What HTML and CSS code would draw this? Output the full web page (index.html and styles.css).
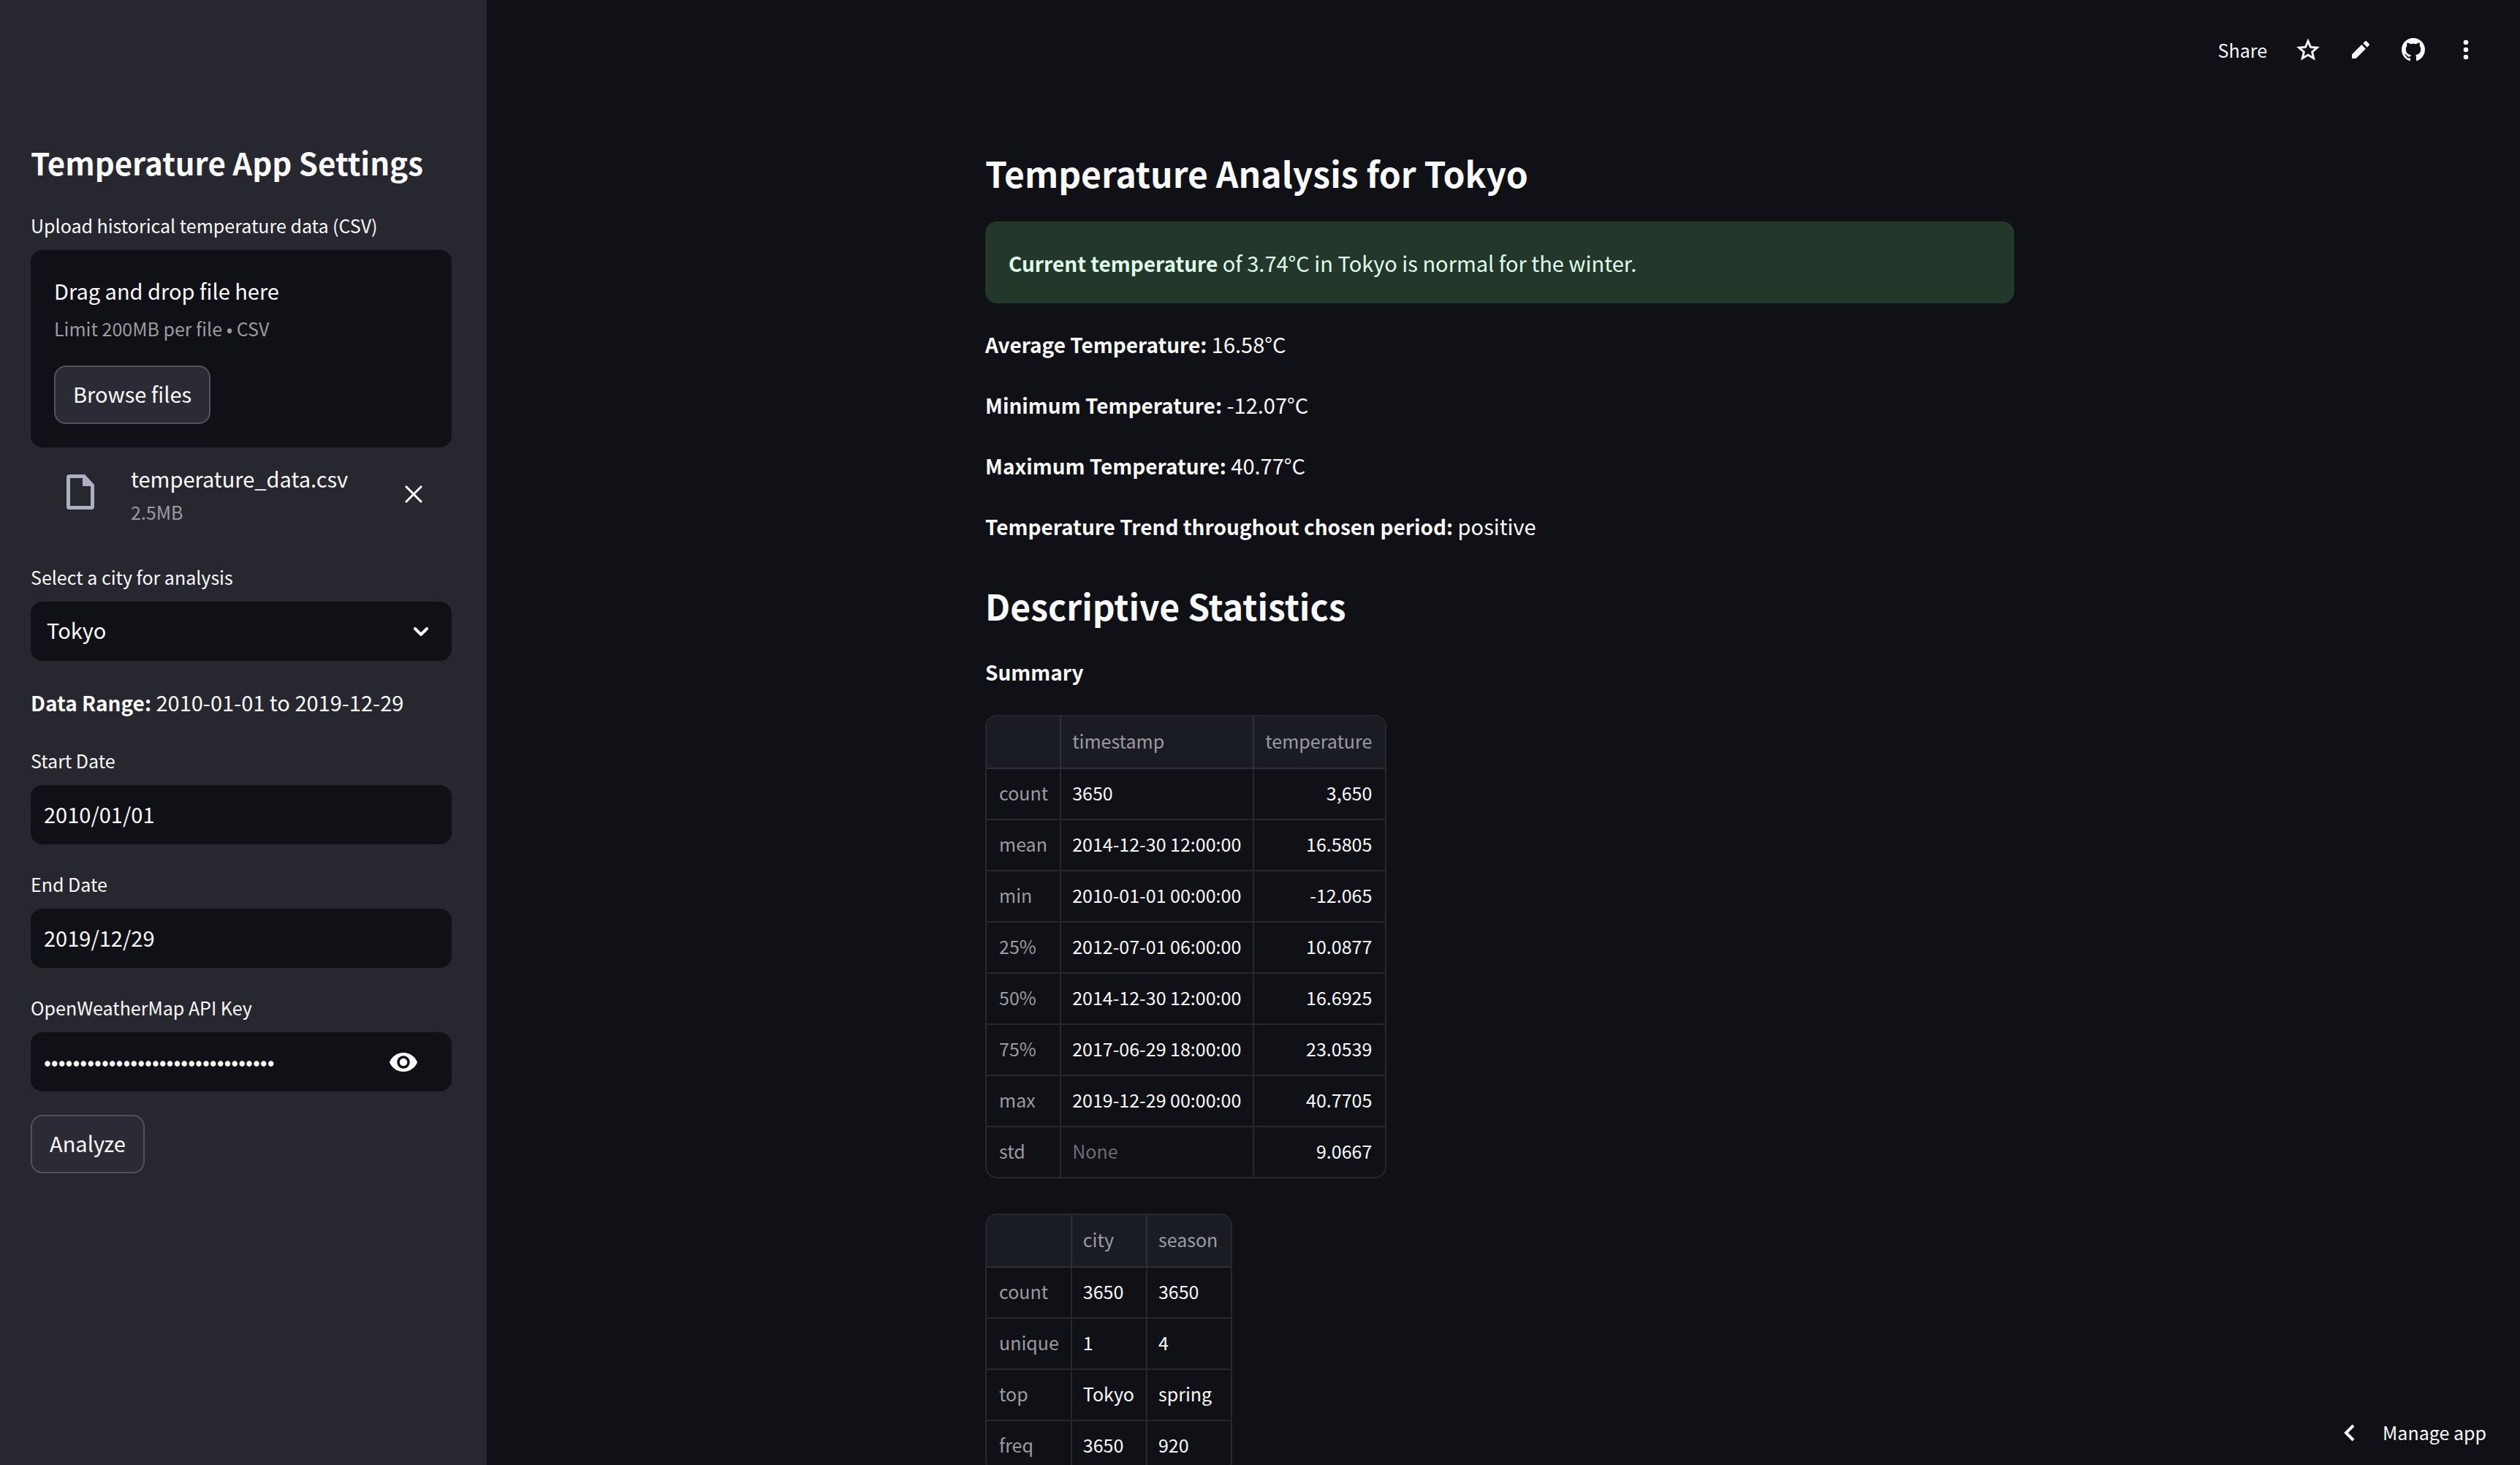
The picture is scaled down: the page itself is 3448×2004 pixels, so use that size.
FILE: index.html
```html
<!DOCTYPE html>
<html lang="en">
<head>
<meta charset="utf-8">
<meta name="viewport" content="width=device-width, initial-scale=1">
<title>Temperature Analysis</title>
<link rel="stylesheet" href="styles.css">
</head>
<body>
<div class="app">
  <aside class="sidebar">
    <h2 class="sidebar-title">Temperature App Settings</h2>

    <div class="field">
      <label class="label" for="browse">Upload historical temperature data (CSV)</label>
      <div class="dropzone">
        <p class="drop-title">Drag and drop file here</p>
        <p class="drop-note">Limit 200MB per file • CSV</p>
        <button class="button" id="browse" type="button">Browse files</button>
      </div>
    </div>

    <div class="file">
      <svg class="file-icon" viewBox="0 0 38 48" aria-hidden="true"><path fill="currentColor" fill-rule="evenodd" d="M4 0H25L38 14V44A4 4 0 0 1 34 48H4A4 4 0 0 1 0 44V4A4 4 0 0 1 4 0ZM5 5V43H33V16H22V5Z"/></svg>
      <div class="file-text">
        <span class="file-name">temperature_data.csv</span>
        <span class="file-size">2.5MB</span>
      </div>
      <button class="icon-button" type="button" aria-label="Remove file">
        <svg class="close-icon" viewBox="0 0 24 24" aria-hidden="true"><path fill="none" stroke="currentColor" stroke-width="3" d="M1 1L23 23M23 1L1 23"/></svg>
      </button>
    </div>

    <div class="field">
      <label class="label" for="city">Select a city for analysis</label>
      <div class="control">
        <select class="input select" id="city"><option>Tokyo</option></select>
        <svg class="chevron" viewBox="0 0 20 12" aria-hidden="true"><path fill="none" stroke="currentColor" stroke-width="4" stroke-linecap="round" stroke-linejoin="round" d="M2 2L10 10L18 2"/></svg>
      </div>
    </div>

    <p class="range"><strong>Data Range:</strong> 2010-01-01 to 2019-12-29</p>

    <div class="field">
      <label class="label" for="start">Start Date</label>
      <input class="input" id="start" type="text" value="2010/01/01">
    </div>
    <div class="field">
      <label class="label" for="end">End Date</label>
      <input class="input" id="end" type="text" value="2019/12/29">
    </div>
    <div class="field">
      <label class="label" for="key">OpenWeatherMap API Key</label>
      <div class="control">
        <input class="input password" id="key" type="password" value="0123456789abcdef0123456789abcdef">
        <button class="reveal" type="button" aria-label="Show password">
          <svg class="eye-icon" viewBox="0 0 22 15" aria-hidden="true"><path fill="currentColor" d="M11 0C6 0 1.730 3.110 0 7.500C1.730 11.890 6 15 11 15s9.270-3.110 11-7.500C20.270 3.110 16 0 11 0zM11 12.500c-2.760 0-5-2.240-5-5s2.240-5 5-5 5 2.240 5 5-2.240 5-5 5zm0-8c-1.660 0-3 1.340-3 3s1.340 3 3 3 3-1.340 3-3-1.340-3-3-3z"/></svg>
        </button>
      </div>
    </div>
    <button class="button analyze" type="button">Analyze</button>
  </aside>

  <div class="page">
    <header class="toolbar">
      <button class="tool share" type="button">Share</button>
      <button class="tool" type="button" aria-label="Favorite">
        <svg class="tool-icon" viewBox="0.3 0 23.4 23.4" aria-hidden="true"><path fill="currentColor" stroke="currentColor" stroke-width="0.3" d="M22 9.240l-7.190-.62L12 2 9.190 8.630 2 9.240l5.460 4.730L5.820 21 12 17.270 18.180 21l-1.630-7.030L22 9.240zM12 15.400l-3.760 2.270 1-4.280-3.320-2.880 4.380-.38L12 6.100l1.710 4.040 4.380.38-3.320 2.880 1 4.280L12 15.400z"/></svg>
      </button>
      <button class="tool" type="button" aria-label="Edit">
        <svg class="tool-icon" viewBox="0 0 24 24" aria-hidden="true"><path fill="currentColor" d="M4 16.300V20H7.700L16.600 11.100L12.900 7.400ZM19.700 8C20.100 7.600 20.100 7 19.700 6.600L17.400 4.300C17 3.900 16.400 3.900 16 4.300L14.200 6.100L17.900 9.800Z"/></svg>
      </button>
      <button class="tool" type="button" aria-label="View source">
        <svg class="github-icon" viewBox="0 0 16 16" aria-hidden="true"><path fill="currentColor" d="M8 0C3.580 0 0 3.580 0 8c0 3.540 2.290 6.530 5.470 7.590.4.070.55-.17.55-.38 0-.19-.01-.82-.01-1.490-2.010.37-2.530-.49-2.690-.94-.09-.23-.48-.94-.82-1.130-.28-.15-.68-.52-.01-.53.63-.01 1.080.58 1.230.82.72 1.210 1.870.87 2.330.66.07-.52.28-.87.51-1.070-1.780-.2-3.640-.89-3.640-3.950 0-.87.31-1.590.82-2.150-.08-.2-.36-1.020.08-2.120 0 0 .67-.21 2.200.82.64-.18 1.320-.27 2-.27s1.360.09 2 .27c1.530-1.040 2.200-.82 2.200-.82.44 1.100.16 1.920.08 2.120.51.56.82 1.270.82 2.150 0 3.070-1.870 3.750-3.650 3.950.29.25.54.73.54 1.480 0 1.070-.01 1.930-.01 2.200 0 .21.15.46.55.38A8.010 8.010 0 0 0 16 8c0-4.420-3.580-8-8-8z"/></svg>
      </button>
      <button class="tool" type="button" aria-label="Menu">
        <svg class="tool-icon" viewBox="0 0 36 36" aria-hidden="true"><g fill="currentColor"><circle cx="18" cy="8" r="3.300"/><circle cx="18" cy="18" r="3.300"/><circle cx="18" cy="28" r="3.300"/></g></svg>
      </button>
    </header>

    <main class="content">
      <h1 class="heading">Temperature Analysis for Tokyo</h1>
      <div class="alert" role="status"><strong>Current temperature</strong> of 3.74°C in Tokyo is normal for the winter.</div>
      <div class="facts">
        <p><strong>Average Temperature:</strong> 16.58°C</p>
        <p><strong>Minimum Temperature:</strong> -12.07°C</p>
        <p><strong>Maximum Temperature:</strong> 40.77°C</p>
        <p><strong>Temperature Trend throughout chosen period:</strong> positive</p>
      </div>
      <h2 class="heading stats-heading">Descriptive Statistics</h2>
      <p class="summary"><strong>Summary</strong></p>

      <div class="frame">
        <table class="data numeric">
          <thead><tr><th></th><th>timestamp</th><th>temperature</th></tr></thead>
          <tbody>
            <tr><th>count</th><td>3650</td><td>3,650</td></tr>
            <tr><th>mean</th><td>2014-12-30 12:00:00</td><td>16.5805</td></tr>
            <tr><th>min</th><td>2010-01-01 00:00:00</td><td>-12.065</td></tr>
            <tr><th>25%</th><td>2012-07-01 06:00:00</td><td>10.0877</td></tr>
            <tr><th>50%</th><td>2014-12-30 12:00:00</td><td>16.6925</td></tr>
            <tr><th>75%</th><td>2017-06-29 18:00:00</td><td>23.0539</td></tr>
            <tr><th>max</th><td>2019-12-29 00:00:00</td><td>40.7705</td></tr>
            <tr><th>std</th><td class="none">None</td><td>9.0667</td></tr>
          </tbody>
        </table>
      </div>

      <div class="frame">
        <table class="data">
          <thead><tr><th></th><th>city</th><th>season</th></tr></thead>
          <tbody>
            <tr><th>count</th><td>3650</td><td>3650</td></tr>
            <tr><th>unique</th><td>1</td><td>4</td></tr>
            <tr><th>top</th><td>Tokyo</td><td>spring</td></tr>
            <tr><th>freq</th><td>3650</td><td>920</td></tr>
          </tbody>
        </table>
      </div>
    </main>

    <button class="manage" type="button">
      <svg class="manage-icon" viewBox="0 0 16 24" aria-hidden="true"><path fill="none" stroke="currentColor" stroke-width="4" d="M14 2L4 12L14 22"/></svg>
      <span>Manage app</span>
    </button>
  </div>
</div>
</body>
</html>
```
FILE: styles.css
```css
* {
  box-sizing: border-box;
}

body,
h1,
h2,
p {
  margin: 0;
}

body {
  background: #101116;
  color: #fafafa;
  font-family: "Noto Sans CJK JP", "Noto Sans", sans-serif;
  font-size: 29px;
  line-height: 51px;
}

button,
input,
select {
  font: inherit;
  color: inherit;
  margin: 0;
}

button {
  cursor: pointer;
}

svg {
  display: block;
}

strong {
  font-size: 28px;
  line-height: 1;
  font-weight: 700;
}

.app {
  display: flex;
  height: 100vh;
  overflow: hidden;
}

/* Sidebar */

.sidebar {
  flex: none;
  display: flex;
  flex-direction: column;
  width: 666px;
  padding: 192px 48px 48px 42px;
  background: #272730;
}

.sidebar-title {
  font-size: 42px;
  line-height: 60px;
  font-weight: 700;
  margin-bottom: 34px;
}

.field {
  display: flex;
  flex-direction: column;
  margin-bottom: 32px;
}

.label {
  font-size: 25px;
  line-height: 44px;
  margin-bottom: 12px;
}

.dropzone {
  background: #101116;
  border-radius: 16px;
  padding: 32px;
}

.drop-title {
  line-height: 46px;
  margin-bottom: 8px;
}

.drop-note {
  font-size: 25px;
  line-height: 42px;
  color: #9c9c9f;
  margin-bottom: 30px;
}

.button {
  display: block;
  height: 80px;
  padding: 0 24px 4px;
  background: #2b2b36;
  border: 2px solid #53545b;
  border-radius: 16px;
  white-space: nowrap;
}

.analyze {
  align-self: flex-start;
}

.file {
  display: flex;
  align-items: center;
  padding: 0 34px 0 49px;
  margin: -14px 0 45px;
}

.file-icon {
  width: 38px;
  height: 48px;
  margin-bottom: 6px;
  color: #adafc3;
}

.file-text {
  flex: 1;
  display: flex;
  flex-direction: column;
  padding-left: 50px;
}

.file-name {
  line-height: 48px;
}

.file-size {
  font-size: 25px;
  line-height: 44px;
  color: #9c9c9f;
}

.icon-button {
  padding: 6px;
  border: 0;
  background: none;
}

.close-icon {
  width: 24px;
  height: 24px;
}

.control {
  display: grid;
  align-items: center;
}

.control > * {
  grid-area: 1 / 1;
}

.input {
  width: 100%;
  height: 81px;
  padding: 0 18px 4px;
  border: 0;
  border-radius: 16px;
  background: #101116;
  outline: none;
}

.select {
  appearance: none;
  padding: 0 22px 4px;
}

.chevron {
  width: 20px;
  height: 12px;
  justify-self: end;
  margin-right: 32px;
  pointer-events: none;
}

.reveal {
  justify-self: end;
  padding: 0;
  margin-right: 46px;
  border: 0;
  background: none;
}

.eye-icon {
  width: 40px;
  height: 26px;
}

.range {
  line-height: 48px;
  margin-bottom: 34px;
}

/* Main column */

.page {
  position: relative;
  flex: 1;
  display: flex;
  flex-direction: column;
  min-width: 0;
  padding-right: 10px;
}

.toolbar {
  flex: none;
  display: flex;
  align-items: center;
  justify-content: flex-end;
  gap: 36px;
  height: 136px;
  padding-right: 46px;
}

.tool {
  padding: 0;
  border: 0;
  background: none;
  font-size: 25px;
}

.share {
  padding-right: 2px;
}

.tool-icon,
.github-icon {
  width: 36px;
  height: 36px;
}

.github-icon {
  padding: 2px;
}

.content {
  flex: none;
  width: 100%;
  max-width: 1408px;
  margin: 0 auto;
  padding-top: 65px;
}

.heading {
  font-size: 48px;
  line-height: 70px;
  font-weight: 700;
}

.alert {
  margin: 32px 0 30px;
  padding: 30px 32px;
  line-height: 52px;
  border-radius: 16px;
  background: #23372b;
  color: #dffde9;
}

.facts {
  display: flex;
  flex-direction: column;
  gap: 32px;
}

.stats-heading {
  margin: 48px 0 30px;
}

.summary {
  margin-bottom: 34px;
}

.frame {
  width: max-content;
  margin-bottom: 48px;
  border: 2px solid #27282d;
  border-radius: 16px;
  overflow: hidden;
}

.data {
  border-collapse: separate;
  border-spacing: 0;
  font-size: 25px;
  line-height: 36px;
}

.data th,
.data td {
  height: 70px;
  padding: 0 16px 4px 15px;
  border-right: 2px solid #27282d;
  border-bottom: 2px solid #27282d;
  text-align: left;
  font-weight: 400;
  white-space: nowrap;
}

.data th {
  color: #9c9c9f;
}

.data thead th {
  height: 72px;
  background: #1a1c24;
  border-color: #2f3036;
}

.data th:first-child {
  padding-left: 17px;
}

.data tr > :last-child {
  padding-right: 18px;
  border-right: 0;
}

.data tbody tr:last-child > * {
  height: 68px;
  border-bottom: 0;
}

.data.numeric tr > :last-child {
  text-align: right;
}

.data .none {
  color: #6d6d71;
}

.manage {
  position: absolute;
  right: 46px;
  bottom: 19px;
  display: flex;
  align-items: center;
  gap: 38px;
  padding: 0;
  border: 0;
  background: none;
  font-size: 25px;
}

.manage-icon {
  width: 16px;
  height: 24px;
}
```
